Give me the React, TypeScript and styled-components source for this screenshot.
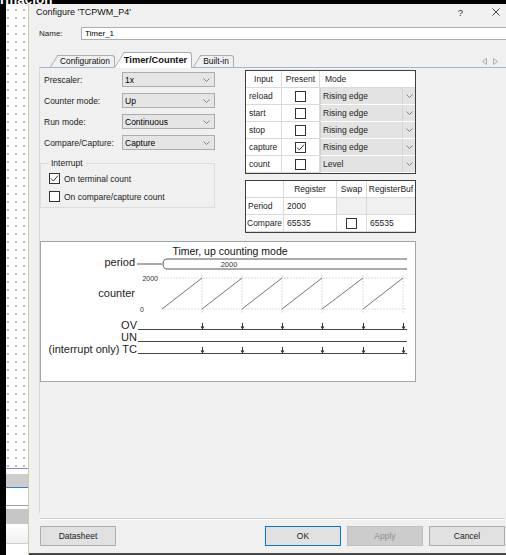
import styled, { createGlobalStyle } from "styled-components";

const GlobalStyle = createGlobalStyle`
  html, body {
    margin: 0;
    padding: 0;
    background: #000;
  }
  body {
    font-family: "Liberation Sans", Arial, sans-serif;
    color: #000;
  }
  * {
    box-sizing: border-box;
  }
`;

const Screen = styled.div`
  width: 506px;
  height: 555px;
  overflow: hidden;
  background: #000;
  display: flex;
  flex-direction: column;
`;

const TopBar = styled.div`
  height: 4px;
  flex-shrink: 0;
  overflow: hidden;
`;

const AppName = styled.div`
  margin-top: -7px;
  color: #fff;
  font: bold 13.5px/13.5px "Liberation Sans", Arial, sans-serif;
  white-space: nowrap;
`;

const Main = styled.div`
  flex: 1;
  display: flex;
  min-height: 0;
`;

const Canvas = styled.div`
  width: 23px;
  margin-left: 6px;
  flex-shrink: 0;
  display: flex;
  flex-direction: column;
  background-color: #fff;
  background-image: radial-gradient(circle, #bdbdbd 0.8px, transparent 1.2px);
  background-size: 8px 8px;
  background-position: -2px 2px;
  border-right: 1px solid #c9cf9e;
`;

const CanvasTable = styled.div`
  margin-top: auto;
  background: #fff;
  display: flex;
  flex-direction: column;
`;

const CanvasBand = styled.div<{ $h: number; $bg: string }>`
  height: ${({ $h }) => $h}px;
  background: ${({ $bg }) => $bg};
`;

const Dialog = styled.div`
  flex: 1;
  display: flex;
  flex-direction: column;
  background: #f0f0f0;
  border-bottom: 2px solid #474747;
  font-size: 8.5px;
`;

const TitleBar = styled.div`
  height: 16px;
  flex-shrink: 0;
  display: flex;
  align-items: center;
  padding: 0 6px 0 7px;
  font-size: 9px;
  color: #111;
`;

const TitleActions = styled.div`
  margin-left: auto;
  display: flex;
  align-items: center;
  gap: 29px;
  font-size: 9.5px;
  color: #333;
`;

const NameRow = styled.div`
  margin-top: 7px;
  height: 13px;
  flex-shrink: 0;
  display: flex;
  align-items: center;
  padding-left: 10px;
  font-size: 8px;
`;

const NameLabel = styled.span`
  width: 42px;
  color: #222;
`;

const NameInput = styled.div`
  flex: 1;
  height: 13px;
  background: #fff;
  border: 1px solid #abadb3;
  border-right: none;
  padding-left: 3px;
  display: flex;
  align-items: center;
`;

const TabStrip = styled.div`
  margin: 13px 0 0 10px;
  height: 14px;
  flex-shrink: 0;
  display: flex;
  align-items: flex-end;
  padding: 0 8px 0 11px;
  position: relative;
  z-index: 1;
`;

const Tab = styled.div<{ $active?: boolean; $shift?: number }>`
  position: relative;
  isolation: isolate;
  height: ${({ $active }) => ($active ? 16 : 12)}px;
  margin-bottom: ${({ $active }) => ($active ? -1 : 0)}px;
  margin-left: ${({ $shift }) => $shift ?? 0}px;
  padding: 0 5px 0 10px;
  display: flex;
  align-items: center;
  font-size: ${({ $active }) => ($active ? 9.3 : 8.4)}px;
  font-weight: ${({ $active }) => ($active ? 700 : 400)};
  color: #111;
  z-index: ${({ $active }) => ($active ? 2 : 1)};
  white-space: nowrap;

  &::before {
    content: "";
    position: absolute;
    top: 0;
    bottom: 0;
    left: 0;
    width: 16px;
    background: ${({ $active }) => ($active ? "#fff" : "#f0f0f0")};
    border-left: 1px solid #acacac;
    border-top: 1px solid #acacac;
    transform: skewX(-32deg);
    transform-origin: bottom left;
    z-index: -1;
  }

  &::after {
    content: "";
    position: absolute;
    top: 0;
    bottom: 0;
    left: 12px;
    right: 0;
    background: ${({ $active }) => ($active ? "#fff" : "#f0f0f0")};
    border-top: 1px solid #acacac;
    border-right: 1px solid #acacac;
    border-top-right-radius: 3px;
    z-index: -1;
  }
`;

const TabArrows = styled.div`
  margin-left: auto;
  align-self: center;
  display: flex;
  gap: 6px;
  margin-top: 2px;
`;

const TabPage = styled.div`
  flex: 1;
  min-height: 0;
  margin-left: 10px;
  border-top: 1px solid #a3b5d0;
  border-left: 1px solid #d9d9d9;
  padding-top: 1px;
  display: flex;
  flex-direction: column;
`;

const TopSection = styled.div`
  display: flex;
  gap: 30px;
`;

const LeftForm = styled.div`
  width: 175px;
  padding-top: 3px;
  display: flex;
  flex-direction: column;
  gap: 6px;
`;

const FieldRow = styled.div`
  height: 15px;
  display: flex;
  align-items: center;
`;

const FieldLabel = styled.span`
  width: 82px;
  padding-left: 4px;
  color: #222;
`;

const Combo = styled.div`
  flex: 1;
  height: 15px;
  background: #e5e5e5;
  border: 1px solid #acacac;
  display: flex;
  align-items: center;
  padding: 0 4px 0 2px;
`;

const ChevronWrap = styled.span`
  margin-left: auto;
  display: flex;
  align-items: center;
`;

const GroupBox = styled.fieldset`
  margin: 2px 0 0;
  padding: 0 0 5px 8px;
  border: 1px solid #dcdcdc;
  display: flex;
  flex-direction: column;
  gap: 7px;

  legend {
    padding: 0 2px;
    line-height: 10px;
    color: #222;
  }
`;

const CheckRow = styled.label`
  height: 11px;
  display: flex;
  align-items: center;
  gap: 4px;
  color: #222;

  &:first-of-type {
    margin-top: 5px;
  }
`;

const CheckBox = styled.span`
  width: 11px;
  height: 11px;
  flex-shrink: 0;
  border: 1px solid #333;
  background: #fff;
  display: flex;
  align-items: center;
  justify-content: center;
`;

const RightColumn = styled.div`
  width: 171px;
  padding-top: 1px;
  display: flex;
  flex-direction: column;
  gap: 6px;
`;

const GridTable = styled.div<{ $cols: string; $n: number }>`
  display: grid;
  grid-template-columns: ${({ $cols }) => $cols};
  grid-auto-rows: 17px;
  border: 1px solid #3d3d3d;
  background: #fff;

  & > div:nth-child(${({ $n }) => $n}n) {
    border-right: none;
  }
`;

const Cell = styled.div<{ $center?: boolean; $bg?: string; $pad?: number }>`
  display: flex;
  align-items: center;
  justify-content: ${({ $center }) => ($center ? "center" : "flex-start")};
  padding: 0 ${({ $pad }) => $pad ?? 3}px;
  background: ${({ $bg }) => $bg ?? "#fff"};
  border-right: 1px solid #d9d9d9;
  border-bottom: 1px solid #d9d9d9;
  white-space: nowrap;
  overflow: hidden;
  color: #222;
`;

const ModeCell = styled.div`
  display: flex;
  align-items: stretch;
  background: #e3e3e3;
  border-bottom: 1px solid #fff;
  border-left: 1px solid #cfcfcf;
  color: #222;
`;

const ModeText = styled.span`
  flex: 1;
  display: flex;
  align-items: center;
  padding-left: 2px;
`;

const ModeDrop = styled.span`
  width: 13px;
  display: flex;
  align-items: center;
  justify-content: center;
  border-left: 1px solid #d3d3d3;
`;

const DiagramBox = styled.div`
  margin-top: 8px;
  width: 376px;
  height: 141px;
  background: #fff;
  border: 1px solid #a5a5a5;
`;

const Footer = styled.div`
  flex-shrink: 0;
  margin-left: 10px;
  padding: 5px 1px 0 1px;
`;

const Separator = styled.div`
  height: 2px;
  border-top: 1px solid #d0d0d0;
  border-bottom: 1px solid #fbfbfb;
`;

const ButtonRow = styled.div`
  margin: 6px 0 7px;
  height: 20px;
  display: flex;
  gap: 6px;
`;

const Button = styled.button<{ $variant?: "primary" | "disabled"; $push?: boolean }>`
  width: 76px;
  height: 20px;
  padding: 0;
  font: 8.5px "Liberation Sans", Arial, sans-serif;
  color: ${({ $variant }) => ($variant === "disabled" ? "#8f8f8f" : "#222")};
  background: ${({ $variant }) => ($variant === "disabled" ? "#cccccc" : "#e1e1e1")};
  border: 1px solid
    ${({ $variant }) =>
      $variant === "primary" ? "#0078d7" : $variant === "disabled" ? "#bfbfbf" : "#adadad"};
  margin-right: ${({ $push }) => ($push ? "auto" : "0")};
`;

function Chevron() {
  return (
    <svg width="7" height="4" viewBox="0 0 7 4">
      <polyline points="0.5,0.5 3.5,3.5 6.5,0.5" fill="none" stroke="#777" strokeWidth="0.9" />
    </svg>
  );
}

function Check({ on }: { on?: boolean }) {
  return (
    <CheckBox>
      {on && (
        <svg width="9" height="9" viewBox="0 0 9 9">
          <polyline points="1,4.6 3.4,7 8,1.6" fill="none" stroke="#333" strokeWidth="1" />
        </svg>
      )}
    </CheckBox>
  );
}

const fields = [
  ["Prescaler:", "1x"],
  ["Counter mode:", "Up"],
  ["Run mode:", "Continuous"],
  ["Compare/Capture:", "Capture"],
];

const inputs = [
  { name: "reload", present: false, mode: "Rising edge" },
  { name: "start", present: false, mode: "Rising edge" },
  { name: "stop", present: false, mode: "Rising edge" },
  { name: "capture", present: true, mode: "Rising edge" },
  { name: "count", present: false, mode: "Level" },
];

const RAMP_X = [121, 161, 201, 241, 281, 322, 362];
const LINE_END = 366;
const signals = [
  { label: "OV", y: 87, arrows: true },
  { label: "UN", y: 99, arrows: false },
  { label: "(interrupt only) TC", y: 111, arrows: true },
];

function TimingDiagram() {
  const font = "'Liberation Sans', Arial, sans-serif";
  return (
    <svg width="374" height="139" viewBox="0 0 374 139" fontFamily={font}>
      <text x="189" y="13" fontSize="10.5" textAnchor="middle" fill="#111">
        Timer, up counting mode
      </text>

      <text x="94" y="24" fontSize="11" textAnchor="end" fill="#222">period</text>
      <line x1="96" y1="22" x2="121" y2="22" stroke="#555" />
      <path
        d={`M${LINE_END},17 L126,17 Q122,17 122,22 Q122,27 126,27 L${LINE_END},27`}
        fill="none"
        stroke="#555"
      />
      <text x="188" y="25" fontSize="7.5" textAnchor="middle" fill="#333">2000</text>

      <line x1="120" y1="36" x2={LINE_END} y2="36" stroke="#ddd" strokeDasharray="2 1" />
      <line x1="120" y1="67" x2={LINE_END} y2="67" stroke="#ddd" strokeDasharray="2 1" />
      {RAMP_X.slice(1).map((x) => (
        <line key={x} x1={x} y1="33" x2={x} y2="71" stroke="#ddd" strokeDasharray="2 1" />
      ))}
      <text x="117" y="39" fontSize="7" textAnchor="end" fill="#333">2000</text>
      <text x="99" y="70" fontSize="7" fill="#333">0</text>
      <text x="94" y="55" fontSize="11" textAnchor="end" fill="#222">counter</text>
      {RAMP_X.slice(0, -1).map((x, i) => (
        <line key={x} x1={x} y1="67" x2={RAMP_X[i + 1]} y2="36" stroke="#666" strokeWidth="0.9" />
      ))}

      {signals.map((s) => (
        <g key={s.label}>
          <text x="96" y={s.y} fontSize="11" textAnchor="end" fill="#222">{s.label}</text>
          <line x1="97" y1={s.y + 0.5} x2={LINE_END} y2={s.y + 0.5} stroke="#444" />
          {s.arrows &&
            RAMP_X.slice(1).map((x) => (
              <g key={x}>
                <line x1={x + 0.5} y1={s.y - 6} x2={x + 0.5} y2={s.y} stroke="#333" />
                <polygon
                  points={`${x - 1.5},${s.y - 2.5} ${x + 2.5},${s.y - 2.5} ${x + 0.5},${s.y + 0.5}`}
                  fill="#333"
                />
              </g>
            ))}
        </g>
      ))}
    </svg>
  );
}

export default function App() {
  return (
    <>
      <GlobalStyle />
      <Screen>
        <TopBar>
          <AppName>rmación</AppName>
        </TopBar>
        <Main>
          <Canvas>
            <CanvasTable>
              <CanvasBand $h={1} $bg="#8b87c9" />
              <CanvasBand $h={5} $bg="#fff" />
              <CanvasBand $h={13} $bg="#cdcdcd" />
              <CanvasBand $h={1} $bg="#2f7fd0" />
              <CanvasBand $h={17} $bg="#fff" />
              <CanvasBand $h={1} $bg="#a0a0a0" />
              <CanvasBand $h={3} $bg="#fff" />
              <CanvasBand $h={15} $bg="#c6c6c6" />
              <CanvasBand $h={19} $bg="linear-gradient(#fff, #f0f0f0)" />
              <CanvasBand $h={1} $bg="#cfcfcf" />
              <CanvasBand $h={11} $bg="#fff" />
            </CanvasTable>
          </Canvas>

          <Dialog>
            <TitleBar>
              Configure 'TCPWM_P4'
              <TitleActions>
                <span>?</span>
                <svg width="8" height="8" viewBox="0 0 8 8">
                  <path d="M0.5,0.5 L7.5,7.5 M7.5,0.5 L0.5,7.5" stroke="#333" strokeWidth="0.9" />
                </svg>
              </TitleActions>
            </TitleBar>

            <NameRow>
              <NameLabel>Name:</NameLabel>
              <NameInput>Timer_1</NameInput>
            </NameRow>

            <TabStrip>
              <Tab>Configuration</Tab>
              <Tab $active $shift={-1}>Timer/Counter</Tab>
              <Tab $shift={1}>Built-in</Tab>
              <TabArrows>
                <svg width="5" height="7" viewBox="0 0 5 7">
                  <polygon points="4.5,0.5 0.5,3.5 4.5,6.5" fill="none" stroke="#9a9a9a" strokeWidth="0.8" />
                </svg>
                <svg width="5" height="7" viewBox="0 0 5 7">
                  <polygon points="0.5,0.5 4.5,3.5 0.5,6.5" fill="none" stroke="#9a9a9a" strokeWidth="0.8" />
                </svg>
              </TabArrows>
            </TabStrip>

            <TabPage>
              <TopSection>
                <LeftForm>
                  {fields.map(([label, value]) => (
                    <FieldRow key={label}>
                      <FieldLabel>{label}</FieldLabel>
                      <Combo>
                        {value}
                        <ChevronWrap>
                          <Chevron />
                        </ChevronWrap>
                      </Combo>
                    </FieldRow>
                  ))}
                  <GroupBox>
                    <legend>Interrupt</legend>
                    <CheckRow>
                      <Check on />
                      On terminal count
                    </CheckRow>
                    <CheckRow>
                      <Check />
                      On compare/capture count
                    </CheckRow>
                  </GroupBox>
                </LeftForm>

                <RightColumn>
                  <GridTable $cols="36px 38px 1fr" $n={3}>
                    <Cell $center>Input</Cell>
                    <Cell $center>Present</Cell>
                    <Cell $pad={5}>Mode</Cell>
                    {inputs.map((row) => [
                      <Cell key={row.name + "n"}>{row.name}</Cell>,
                      <Cell key={row.name + "p"} $center>
                        <Check on={row.present} />
                      </Cell>,
                      <ModeCell key={row.name + "m"}>
                        <ModeText>{row.mode}</ModeText>
                        <ModeDrop>
                          <Chevron />
                        </ModeDrop>
                      </ModeCell>,
                    ])}
                  </GridTable>

                  <GridTable $cols="38px 53px 30px 1fr" $n={4}>
                    <Cell />
                    <Cell $center>Register</Cell>
                    <Cell $center>Swap</Cell>
                    <Cell $center $pad={1}>RegisterBuf</Cell>
                    <Cell $pad={2}>Period</Cell>
                    <Cell>2000</Cell>
                    <Cell $bg="#f0f0f0" />
                    <Cell $bg="#f0f0f0" />
                    <Cell $pad={1}>Compare</Cell>
                    <Cell>65535</Cell>
                    <Cell $center>
                      <Check />
                    </Cell>
                    <Cell>65535</Cell>
                  </GridTable>
                </RightColumn>
              </TopSection>

              <DiagramBox>
                <TimingDiagram />
              </DiagramBox>
            </TabPage>

            <Footer>
              <Separator />
              <ButtonRow>
                <Button $push>Datasheet</Button>
                <Button $variant="primary">OK</Button>
                <Button $variant="disabled">Apply</Button>
                <Button>Cancel</Button>
              </ButtonRow>
            </Footer>
          </Dialog>
        </Main>
      </Screen>
    </>
  );
}
